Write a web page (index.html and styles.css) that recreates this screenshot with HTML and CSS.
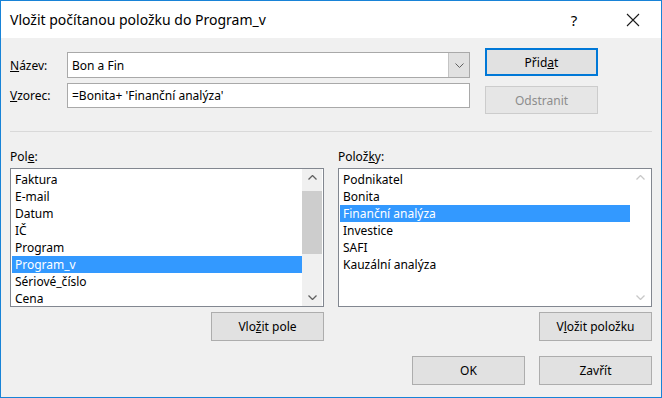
FILE: index.html
```html
<!DOCTYPE html>
<html>
<head>
    <meta charset="utf-8">
    <meta name="viewport" content="width=device-width, initial-scale=1.0">
    <title>Vložit počítanou položku</title>
    <link rel="stylesheet" href="styles.css">
</head>
<body>
<div class="window">
    <!-- Title bar -->
    <div class="titlebar">
        <span class="title">Vložit počítanou položku do Program_v</span>
        <span class="help">?</span>
        <span class="close">
            <svg width="14" height="14" viewBox="0 0 14 14"><path d="M1 1 L13 13 M13 1 L1 13" stroke="#1a1a1a" stroke-width="1.1" fill="none"/></svg>
        </span>
    </div>

    <div class="content">
        <!-- Name / formula -->
        <div class="top">
            <div class="fields">
                <div class="field-row">
                    <label class="field-label"><u>N</u>ázev:</label>
                    <div class="combo">
                        <span class="value">Bon a Fin</span>
                        <span class="drop">
                            <svg width="9" height="5" viewBox="0 0 9 5"><path d="M0.5 0.5 L4.5 4.5 L8.5 0.5" stroke="#606060" fill="none"/></svg>
                        </span>
                    </div>
                </div>
                <div class="field-row second">
                    <label class="field-label"><u>V</u>zorec:</label>
                    <div class="textbox">=Bonita+ 'Finanční analýza'</div>
                </div>
            </div>
            <div class="side-buttons">
                <button class="btn default">Přid<u>a</u>t</button>
                <button class="btn disabled">Odstranit</button>
            </div>
        </div>

        <div class="separator"></div>

        <!-- Fields and items -->
        <div class="lists">
            <div class="list-col">
                <div class="list-label">Pol<u>e</u>:</div>
                <div class="listbox">
                    <div class="items">
                        <div class="item">Faktura</div>
                        <div class="item">E-mail</div>
                        <div class="item">Datum</div>
                        <div class="item">IČ</div>
                        <div class="item">Program</div>
                        <div class="item selected">Program_v</div>
                        <div class="item">Sériové_číslo</div>
                        <div class="item">Cena</div>
                    </div>
                    <div class="scrollbar">
                        <div class="arrow">
                            <svg width="9" height="5" viewBox="0 0 9 5"><path d="M0.5 4.5 L4.5 0.5 L8.5 4.5" stroke="#606060" stroke-width="1.3" fill="none"/></svg>
                        </div>
                        <div class="thumb-gap"></div>
                        <div class="thumb"></div>
                        <div class="track-rest"></div>
                        <div class="arrow">
                            <svg width="9" height="5" viewBox="0 0 9 5"><path d="M0.5 0.5 L4.5 4.5 L8.5 0.5" stroke="#606060" stroke-width="1.3" fill="none"/></svg>
                        </div>
                    </div>
                </div>
                <div class="list-actions">
                    <button class="btn">Vlo<u>ž</u>it pole</button>
                </div>
            </div>

            <div class="list-col">
                <div class="list-label">Polož<u>k</u>y:</div>
                <div class="listbox">
                    <div class="items">
                        <div class="item">Podnikatel</div>
                        <div class="item">Bonita</div>
                        <div class="item selected">Finanční analýza</div>
                        <div class="item">Investice</div>
                        <div class="item">SAFI</div>
                        <div class="item">Kauzální analýza</div>
                    </div>
                    <div class="scrollbar off">
                        <div class="arrow">
                            <svg width="9" height="5" viewBox="0 0 9 5"><path d="M0.5 4.5 L4.5 0.5 L8.5 4.5" stroke="#c8c8c8" stroke-width="1.3" fill="none"/></svg>
                        </div>
                        <div class="track-rest"></div>
                        <div class="arrow">
                            <svg width="9" height="5" viewBox="0 0 9 5"><path d="M0.5 0.5 L4.5 4.5 L8.5 0.5" stroke="#c8c8c8" stroke-width="1.3" fill="none"/></svg>
                        </div>
                    </div>
                </div>
                <div class="list-actions">
                    <button class="btn">V<u>l</u>ožit položku</button>
                </div>
            </div>
        </div>

        <!-- Dialog buttons -->
        <div class="footer">
            <button class="btn">OK</button>
            <button class="btn">Zavřít</button>
        </div>
    </div>
</div>
</body>
</html>
```

FILE: styles.css
```css
/* Reset */
html, body {
    margin: 0;
    padding: 0;
}

body {
    font-family: "Noto Sans", "Open Sans", sans-serif;
    font-size: 12px;
    color: #000;
    background: #fff;
}

/* Dialog frame */
.window {
    width: 662px;
    height: 398px;
    box-sizing: border-box;
    border: 1px solid #1883d7;
    display: flex;
    flex-direction: column;
}

.titlebar {
    height: 37px;
    background: #fff;
    display: flex;
    align-items: center;
    padding-left: 9px;
}

.title {
    font-size: 14px;
    flex: 1;
}

.help {
    font-size: 15px;
    width: 20px;
    text-align: center;
    margin-right: 42px;
}

.close {
    display: flex;
    margin-right: 21px;
}

.content {
    flex: 1;
    background: #f0f0f0;
    padding: 0 9px;
}

/* Top area */
.top {
    height: 93px;
    display: flex;
    justify-content: space-between;
}

.fields {
    padding-top: 14px;
    display: flex;
    flex-direction: column;
    gap: 5px;
}

.field-row {
    display: flex;
    align-items: center;
}

.field-label {
    width: 57px;
}

.combo, .textbox {
    width: 403px;
    height: 26px;
    box-sizing: border-box;
    border: 1px solid #a9a9a9;
    background: #fff;
    display: flex;
    align-items: center;
}

.textbox {
    height: 25px;
    padding-left: 4px;
}

.combo .value {
    flex: 1;
    padding-left: 4px;
}

.combo .drop {
    width: 20px;
    height: 24px;
    background: #e1e1e1;
    border-left: 1px solid #c4c4c4;
    display: flex;
    align-items: center;
    justify-content: center;
}

.side-buttons {
    padding-top: 10px;
    padding-right: 54px;
    display: flex;
    flex-direction: column;
    gap: 10px;
}

/* Buttons */
.btn {
    width: 113px;
    height: 29px;
    box-sizing: border-box;
    background: #e1e1e1;
    border: 1px solid #adadad;
    font-family: inherit;
    font-size: 12px;
    color: #000;
    padding: 0;
}

.btn.default {
    height: 28px;
    border: 2px solid #0078d7;
}

.btn.disabled {
    height: 28px;
    background: #e6e6e6;
    border-color: #cccccc;
    color: #8d8d8d;
}

.separator {
    height: 1px;
    background: #d9d9d9;
}

/* Lists */
.lists {
    display: flex;
    gap: 14px;
}

.list-col {
    width: 314px;
}

.list-label {
    padding-top: 17px;
    line-height: 16px;
    height: 16px;
}

.listbox {
    margin-top: 3px;
    height: 139px;
    box-sizing: border-box;
    border: 1px solid #828790;
    background: #fff;
    display: flex;
    padding-right: 1px;
}

.items {
    flex: 1;
    padding: 2px 0 0 1px;
    overflow: hidden;
}

.item {
    line-height: 17px;
    height: 17px;
    padding-left: 3px;
    white-space: nowrap;
}

.item.selected {
    background: #3399ff;
    color: #fff;
}

.scrollbar {
    width: 20px;
    background: #f0f0f0;
    display: flex;
    flex-direction: column;
}

.scrollbar.off {
    background: #fff;
}

.arrow {
    height: 17px;
    display: flex;
    align-items: center;
    justify-content: center;
}

.thumb-gap {
    height: 5px;
}

.thumb {
    height: 63px;
    background: #cdcdcd;
}

.track-rest {
    flex: 1;
}

.list-actions {
    margin-top: 5px;
    display: flex;
    justify-content: flex-end;
}

/* Bottom buttons */
.footer {
    margin-top: 15px;
    display: flex;
    justify-content: flex-end;
    gap: 14px;
}
```
